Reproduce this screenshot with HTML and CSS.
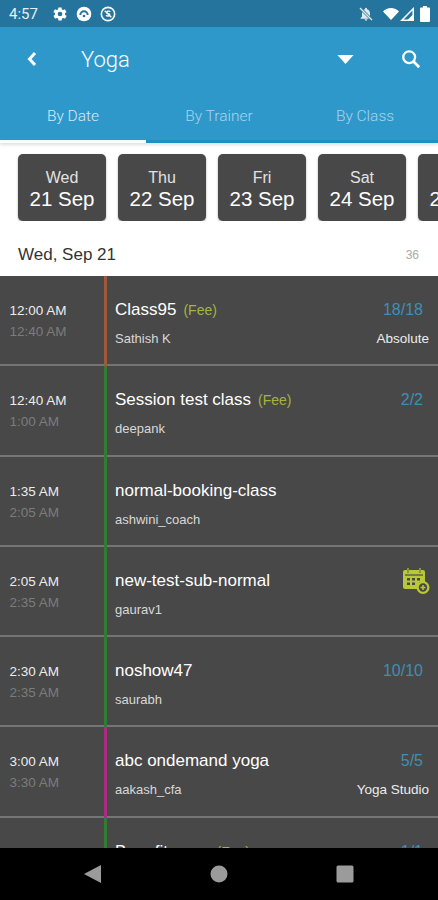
FILE: index.html
```html
<!DOCTYPE html>
<html lang="en">
<head>
  <meta charset="UTF-8">
  <meta name="viewport" content="width=device-width, initial-scale=1.0">
  <title>Yoga</title>
  <link rel="stylesheet" href="styles.css">
</head>
<body>
  <div class="phone">
    <!-- Status bar -->
    <div class="status-bar">
      <span class="clock">4:57</span>
      <svg class="status-icon" viewBox="0 0 24 24"><path fill="#fff" d="M19.4 13c.1-.3.1-.7.1-1s0-.7-.1-1l2.1-1.6c.2-.2.2-.4.1-.6l-2-3.5c-.1-.2-.4-.3-.6-.2l-2.5 1c-.5-.4-1.1-.7-1.7-1l-.4-2.6c0-.3-.2-.4-.5-.4h-4c-.3 0-.5.1-.5.4l-.4 2.600c-.6.3-1.2.6-1.7 1l-2.5-1c-.2-.1-.5 0-.6.2l-2 3.500c-.1.2-.1.4.1.6L4.600 11c-.1.3-.1.7-.1 1s0 .7.1 1l-2.100 1.600c-.2.2-.2.4-.1.6l2 3.500c.1.2.4.3.6.2l2.500-1c.5.4 1.100.7 1.700 1l.4 2.600c0 .3.2.4.5.4h4c.3 0 .5-.1.5-.4l.4-2.600c.6-.3 1.200-.6 1.700-1l2.500 1c.2.1.5 0 .6-.2l2-3.500c.1-.2.1-.4-.1-.6zM12 15.500a3.500 3.500 0 1 1 0-7 3.500 3.500 0 0 1 0 7z"/></svg>
      <svg class="status-icon" viewBox="0 0 24 24"><circle cx="12" cy="12" r="11" fill="#fff"/><path d="M6.500 13.500a5.500 5.500 0 0 1 11 0" fill="none" stroke="#25749e" stroke-width="3"/><circle cx="12" cy="15" r="2" fill="#25749e"/></svg>
      <svg class="status-icon" viewBox="0 0 24 24"><circle cx="12" cy="12" r="10" fill="none" stroke="#fff" stroke-width="2.400"/><path d="M7 7l10 10" stroke="#fff" stroke-width="2"/><path d="M15.500 8.500c-2-1.500-6-.8-5.500 1.300.4 1.800 5 1.300 4.800 3.500-.2 2-3.800 2.200-6 .8" fill="none" stroke="#fff" stroke-width="2"/></svg>
      <span class="status-spacer"></span>
      <svg class="status-icon bell" viewBox="0 0 24 24"><path fill="#dfe9ef" d="M12 22a2 2 0 0 0 2-2h-4a2 2 0 0 0 2 2zm6-6v-5c0-3-1.600-5.600-4.500-6.300V4a1.500 1.500 0 0 0-3 0v.7C7.600 5.400 6 8 6 11v5l-2 2v1h16v-1z"/><path d="M3 3l18 18" stroke="#25749e" stroke-width="4"/><path d="M3 3l18 18" stroke="#dfe9ef" stroke-width="2"/></svg>
      <svg class="wifi" viewBox="0 0 16 12"><path fill="#fff" d="M8 12L0 3.500C2 1.300 4.800 0 8 0s6 1.300 8 3.500z"/></svg>
      <svg class="signal" viewBox="0 0 14 14"><path fill="none" stroke="#fff" stroke-width="1.500" d="M1.800 13.200L13.200 1.800v11.400z"/><path fill="#fff" d="M7 13.500L13.500 7v6.500z"/></svg>
      <svg class="battery" viewBox="0 0 10 16"><path fill="#fff" d="M3 0h4v1.500h2a1 1 0 0 1 1 1V15a1 1 0 0 1-1 1H1a1 1 0 0 1-1-1V2.500a1 1 0 0 1 1-1h2z"/></svg>
    </div>

    <!-- Toolbar -->
    <div class="toolbar">
      <svg class="back" viewBox="0 0 12 16"><path d="M9 2L3.500 8 9 14" fill="none" stroke="#fff" stroke-width="3"/></svg>
      <span class="toolbar-title">Yoga</span>
      <svg class="caret" viewBox="0 0 18 10"><path fill="#fff" d="M0 0h18L9 10z"/></svg>
      <svg class="search" viewBox="0 0 22 22"><circle cx="9" cy="9" r="6.500" fill="none" stroke="#fff" stroke-width="2.500"/><path d="M13.500 13.500L20 20" stroke="#fff" stroke-width="3"/></svg>
    </div>

    <div class="tabs">
      <div class="tab active">By Date</div>
      <div class="tab">By Trainer</div>
      <div class="tab">By Class</div>
    </div>

    <!-- Date strip -->
    <div class="dates">
      <div class="date-card"><span class="day">Wed</span><span class="date">21 Sep</span></div>
      <div class="date-card"><span class="day">Thu</span><span class="date">22 Sep</span></div>
      <div class="date-card"><span class="day">Fri</span><span class="date">23 Sep</span></div>
      <div class="date-card"><span class="day">Sat</span><span class="date">24 Sep</span></div>
      <div class="date-card"><span class="day">Sun</span><span class="date">25 Sep</span></div>
    </div>

    <div class="list-header">
      <span class="list-date">Wed, Sep 21</span>
      <span class="list-count">36</span>
    </div>

    <!-- Classes -->
    <div class="classes">
      <div class="row">
        <div class="times"><span class="start">12:00 AM</span><span class="end">12:40 AM</span></div>
        <div class="info brown">
          <div class="line-top"><span class="name">Class95</span><span class="fee">(Fee)</span><span class="slots">18/18</span></div>
          <div class="line-bottom"><span class="trainer">Sathish K</span><span class="studio">Absolute</span></div>
        </div>
      </div>
      <div class="row">
        <div class="times"><span class="start">12:40 AM</span><span class="end">1:00 AM</span></div>
        <div class="info green">
          <div class="line-top"><span class="name">Session test class</span><span class="fee">(Fee)</span><span class="slots">2/2</span></div>
          <div class="line-bottom"><span class="trainer">deepank</span></div>
        </div>
      </div>
      <div class="row">
        <div class="times"><span class="start">1:35 AM</span><span class="end">2:05 AM</span></div>
        <div class="info green">
          <div class="line-top"><span class="name">normal-booking-class</span></div>
          <div class="line-bottom"><span class="trainer">ashwini_coach</span></div>
        </div>
      </div>
      <div class="row">
        <div class="times"><span class="start">2:05 AM</span><span class="end">2:35 AM</span></div>
        <div class="info green">
          <div class="line-top"><span class="name">new-test-sub-normal</span>
            <svg class="book-icon" viewBox="0 0 28 28">
              <path fill="#b9c836" d="M1 5a2 2 0 0 1 2-2h18a2 2 0 0 1 2 2v10h-6v7H3a2 2 0 0 1-2-2z"/>
              <path d="M6 1v5M18 1v5" stroke="#b9c836" stroke-width="2"/>
              <path d="M6 1v5M18 1v5" stroke="#484848" stroke-width="0.800"/>
              <path d="M3 8h18" stroke="#484848" stroke-width="1.200"/>
              <path d="M5 11h3v2.500H5zM10 11h3v2.500h-3zM15 11h3v2.500h-3zM5 15.500h3V18H5zM10 15.500h3V18h-3z" fill="#484848"/>
              <circle cx="21" cy="20.500" r="6.500" fill="#b9c836"/>
              <circle cx="21" cy="20.500" r="4.200" fill="#484848"/>
              <path d="M18.500 20.500h5M21 18v5" stroke="#b9c836" stroke-width="1.500"/>
            </svg>
          </div>
          <div class="line-bottom"><span class="trainer">gaurav1</span></div>
        </div>
      </div>
      <div class="row">
        <div class="times"><span class="start">2:30 AM</span><span class="end">2:35 AM</span></div>
        <div class="info green">
          <div class="line-top"><span class="name">noshow47</span><span class="slots">10/10</span></div>
          <div class="line-bottom"><span class="trainer">saurabh</span></div>
        </div>
      </div>
      <div class="row">
        <div class="times"><span class="start">3:00 AM</span><span class="end">3:30 AM</span></div>
        <div class="info pink">
          <div class="line-top"><span class="name">abc ondemand yoga</span><span class="slots">5/5</span></div>
          <div class="line-bottom"><span class="trainer">aakash_cfa</span><span class="studio">Yoga Studio</span></div>
        </div>
      </div>
      <div class="row">
        <div class="times"><span class="start">3:30 AM</span><span class="end">4:00 AM</span></div>
        <div class="info green">
          <div class="line-top"><span class="name">Benefit yoga</span><span class="fee">(Fee)</span><span class="slots">1/1</span></div>
          <div class="line-bottom"><span class="trainer">saurabh</span></div>
        </div>
      </div>
    </div>

    <!-- Navigation bar -->
    <div class="nav-bar">
      <svg class="nav-icon" viewBox="0 0 18 18"><path fill="#9b9b9b" d="M17 0v18L0 9z"/></svg>
      <svg class="nav-icon" viewBox="0 0 18 18"><circle cx="9" cy="9" r="8.500" fill="#9b9b9b"/></svg>
      <svg class="nav-icon" viewBox="0 0 18 18"><rect x="0.500" y="0.500" width="17" height="17" rx="1.500" fill="#9b9b9b"/></svg>
    </div>
  </div>
</body>
</html>
```

FILE: styles.css
```css
* {
  margin: 0;
  padding: 0;
  box-sizing: border-box;
}
body {
  font-family: "Liberation Sans", Arial, sans-serif;
  background-color: #000;
}
.phone {
  display: flex;
  flex-direction: column;
  height: 900px;
  overflow: hidden;
  background-color: #fff;
}

/* Status bar */
.status-bar {
  display: flex;
  align-items: center;
  flex: none;
  height: 27px;
  padding: 0 8px 0 9px;
  background-color: #25749e;
}
.clock {
  margin-right: 14px;
  font-family: Roboto, sans-serif;
  font-size: 15px;
  color: #e8f0f4;
}
.status-icon {
  width: 16px;
  height: 16px;
  margin-right: 8px;
}
.status-spacer {
  flex: 1;
}
.bell {
  margin-right: 9px;
}
.wifi {
  width: 16px;
  height: 12px;
  margin-right: 1px;
}
.signal {
  width: 14px;
  height: 14px;
  margin-right: 6px;
}
.battery {
  width: 10px;
  height: 16px;
}

/* Toolbar */
.toolbar {
  display: flex;
  align-items: center;
  flex: none;
  height: 64px;
  padding: 0 17px 0 26px;
  background-color: #2f98cb;
}
.back {
  width: 12px;
  height: 16px;
}
.toolbar-title {
  flex: 1;
  margin-left: 43px;
  font-family: Roboto, sans-serif;
  font-size: 22px;
  font-weight: 300;
  color: #fff;
}
.caret {
  width: 17px;
  height: 9px;
  margin-right: 47px;
}
.search {
  width: 20px;
  height: 20px;
}
.tabs {
  display: flex;
  flex: none;
  height: 52px;
  background-color: #2f98cb;
  box-shadow: 0 2px 3px rgba(0, 0, 0, 0.12);
}
.tab {
  flex: 1;
  padding-top: 16px;
  border-bottom: 3px solid #1f8fc6;
  font-family: Roboto, sans-serif;
  font-size: 15.500px;
  font-weight: 300;
  text-align: center;
  color: #a9d3e8;
}
.tab.active {
  border-bottom-color: #fff;
  color: #d5eaf5;
}

/* Date strip */
.dates {
  display: flex;
  flex: none;
  gap: 12px;
  padding: 11px 0 0 18px;
  overflow: hidden;
}
.date-card {
  display: flex;
  flex: none;
  flex-direction: column;
  align-items: center;
  width: 88px;
  height: 67px;
  padding-top: 15px;
  background-color: #484848;
  border-radius: 5px;
  box-shadow: 0 1px 2px rgba(0, 0, 0, 0.4);
  color: #fff;
}
.day {
  font-size: 16px;
  line-height: 18px;
  color: #e2e2e2;
}
.date {
  font-size: 20.500px;
  line-height: 24px;
}
.list-header {
  display: flex;
  flex: none;
  justify-content: space-between;
  align-items: center;
  height: 55px;
  padding: 12px 19px 0 18px;
}
.list-date {
  font-size: 17px;
  color: #333;
}
.list-count {
  font-size: 12px;
  color: #aaa;
}

/* Class rows */
.classes {
  flex: 1;
  overflow: hidden;
  background-color: #484848;
}
.row {
  display: flex;
  height: 90.300px;
  border-bottom: 2px solid #757575;
}
.times {
  display: flex;
  flex-direction: column;
  flex: none;
  gap: 5px;
  width: 104px;
  padding: 27px 0 0 9.500px;
  font-size: 13.500px;
  line-height: 16px;
}
.start {
  color: #ececec;
}
.end {
  color: #7c7c7c;
}
.info {
  flex: 1;
  min-width: 0;
  padding: 22px 9px 0 8px;
  border-left: 3px solid #2e7d32;
  margin-bottom: -2px;
}
.info.brown {
  border-left-color: #a0583a;
}
.info.green {
  border-left-color: #2e7d32;
}
.info.pink {
  border-left-color: #a92c80;
}
.line-top {
  display: flex;
  align-items: center;
  height: 24px;
}
.name {
  font-size: 17px;
  color: #fff;
}
.fee {
  margin-left: 7px;
  font-size: 14px;
  color: #a3b53d;
}
.slots {
  margin-left: auto;
  padding-right: 6px;
  font-size: 16px;
  color: #3f8fb5;
}
.book-icon {
  width: 28px;
  height: 28px;
  margin-left: auto;
  margin-right: -1px;
}
.line-bottom {
  display: flex;
  justify-content: space-between;
  margin-top: 9px;
  font-size: 13px;
  line-height: 16px;
}
.trainer {
  color: #d8d8d8;
}
.studio {
  font-size: 13.500px;
  color: #ececec;
}

/* Navigation bar */
.nav-bar {
  display: flex;
  justify-content: space-between;
  align-items: center;
  flex: none;
  height: 52px;
  padding: 0 84px;
  background-color: #000;
}
.nav-icon {
  width: 18px;
  height: 18px;
}
```
